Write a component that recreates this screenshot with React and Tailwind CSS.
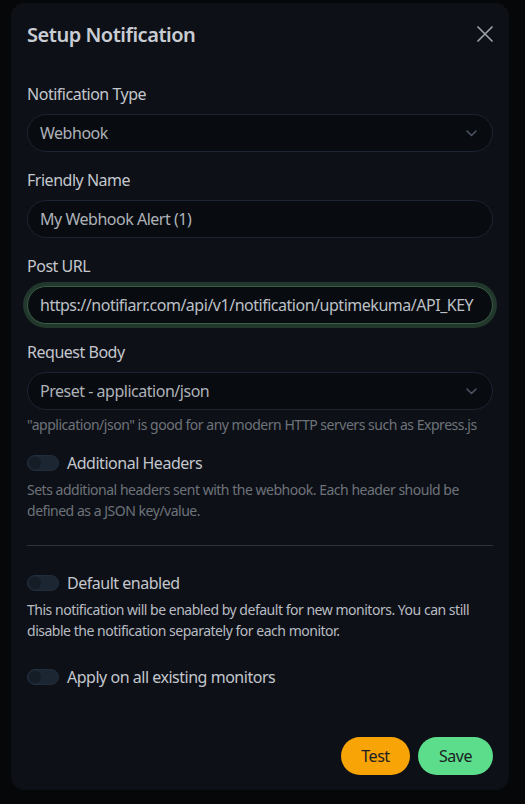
import React from "react";

function Toggle() {
  return (
    <span className="relative inline-block w-8 h-4 rounded-full bg-[#1c2633] border border-[#222d3b] shrink-0">
      <span className="absolute left-[1px] top-[1px] w-[12px] h-[12px] rounded-full bg-[#141c26]" />
    </span>
  );
}

function Chevron() {
  return (
    <svg width="11" height="7" viewBox="0 0 11 7" className="shrink-0">
      <path d="M1 1 L5.5 5.5 L10 1" fill="none" stroke="#4b5462" strokeWidth="1.6" strokeLinecap="round" strokeLinejoin="round" />
    </svg>
  );
}

function Select({ value }) {
  return (
    <div className="flex items-center justify-between h-[38px] rounded-full border border-[#1c2431] bg-[#080b10] pl-[12px] pr-[15px]">
      <span className="text-[16px] text-[#aeb2b8]">{value}</span>
      <Chevron />
    </div>
  );
}

function Label({ children }) {
  return <div className="text-[16px] leading-[24px] text-[#c3c7cd] mb-[8px]">{children}</div>;
}

export default function App() {
  return (
    <div
      className="w-[525px] h-[804px] bg-[#060708] pt-[3px] pl-[11px] overflow-hidden tracking-[-0.03em]"
      style={{ fontFamily: '"Noto Sans", "Open Sans", sans-serif' }}
    >
      <div className="w-[498px] h-[787px] rounded-[14px] bg-[#0d1017] flex flex-col">
        <div className="flex items-center justify-between px-[16px] pt-[17px] pb-[15px] h-[62px]">
          <div className="text-[20px] leading-[30px] font-semibold text-[#c9cdd3]">Setup Notification</div>
          <svg width="16" height="16" viewBox="0 0 16 16" className="-mt-[2px]">
            <path d="M1 1 L15 15 M15 1 L1 15" stroke="#9aa0a7" strokeWidth="1.7" strokeLinecap="round" />
          </svg>
        </div>
        <div className="px-[16px] pt-[17px] flex-1 flex flex-col">
          <Label>Notification Type</Label>
          <Select value="Webhook" />
          <div className="h-[16px]" />
          <Label>Friendly Name</Label>
          <div className="flex items-center h-[38px] rounded-full border border-[#1c2431] bg-[#080b10] px-[12px]">
            <span className="text-[16px] text-[#aeb2b8]">My Webhook Alert (1)</span>
          </div>
          <div className="h-[16px]" />
          <Label>Post URL</Label>
          <div className="flex items-center h-[38px] rounded-full border border-[#3a5d47] bg-[#080b10] px-[12px] ring-[4px] ring-[#23382c]">
            <span className="text-[16px] text-[#bcc0c6] whitespace-nowrap">https://notifiarr.com/api/v1/notification/uptimekuma/API_KEY</span>
          </div>
          <div className="h-[16px]" />
          <Label>Request Body</Label>
          <Select value="Preset - application/json" />
          <div className="mt-[4px] text-[14px] leading-[21px] text-[#6d737a] whitespace-nowrap">
            "application/json" is good for any modern HTTP servers such as Express.js
          </div>
          <div className="mt-[16px] flex items-center gap-[8px] h-[24px]">
            <Toggle />
            <span className="text-[16px] text-[#c3c7cd]">Additional Headers</span>
          </div>
          <div className="mt-[4px] text-[14px] leading-[21px] text-[#6d737a] pr-[6px]">
            Sets additional headers sent with the webhook. Each header should be defined as a JSON key/value.
          </div>
          <div className="mt-[24px] h-px bg-[#2e333b]" />
          <div className="mt-[25px] flex items-center gap-[8px] h-[24px]">
            <Toggle />
            <span className="text-[16px] text-[#c3c7cd]">Default enabled</span>
          </div>
          <div className="mt-[4px] text-[14px] leading-[21px] text-[#b8bcc2]">
            This notification will be enabled by default for new monitors. You can still disable the notification separately for each monitor.
          </div>
          <div className="mt-[24px] flex items-center gap-[8px] h-[24px]">
            <Toggle />
            <span className="text-[16px] text-[#c3c7cd]">Apply on all existing monitors</span>
          </div>
          <div className="flex-1" />
          <div className="flex justify-end gap-[8px] pb-[15px]">
            <button className="h-[38px] w-[69px] rounded-full bg-[#f8a306] text-[16px] text-[#1a1d22]">Test</button>
            <button className="h-[38px] w-[75px] rounded-full bg-[#5cdd8b] text-[16px] text-[#1a1d22]">Save</button>
          </div>
        </div>
      </div>
    </div>
  );
}
